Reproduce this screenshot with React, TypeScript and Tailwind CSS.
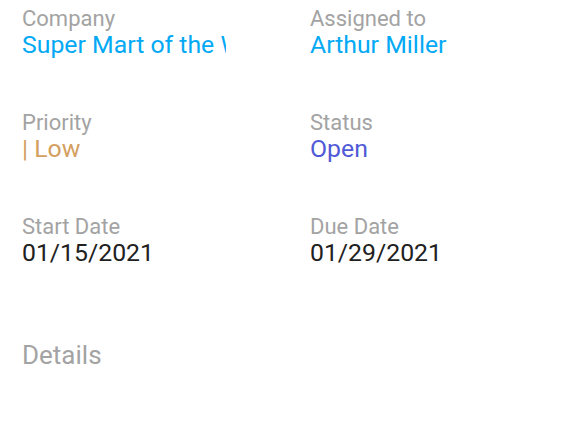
function Field({ label, value, valueClass }: { label: string; value: string; valueClass: string }) {
    return (
        <div className="flex flex-col">
            <span className="text-[22px] leading-[24px] text-[#a3a3a3]">{label}</span>
            <span className={"text-[24.8px] leading-[28px] whitespace-nowrap overflow-hidden " + valueClass}>{value}</span>
        </div>
    );
}

export default function App() {
    return (
        <div className="w-[576px] h-[434px] bg-white font-['Roboto',sans-serif] pl-[22px] pt-[7px]">
            <div className="grid grid-cols-[288px_1fr] gap-y-[52px]">
                <div className="w-[204px]">
                    <Field label="Company" value="Super Mart of the West" valueClass="text-[#03a9f4]" />
                </div>
                <Field label="Assigned to" value="Arthur Miller" valueClass="text-[#03a9f4]" />
                <Field label="Priority" value="| Low" valueClass="text-[#d4a060]" />
                <Field label="Status" value="Open" valueClass="text-[#5059d6]" />
                <Field label="Start Date" value="01/15/2021" valueClass="text-[#212121]" />
                <Field label="Due Date" value="01/29/2021" valueClass="text-[#212121]" />
            </div>
            <div className="mt-[73px] text-[26px] leading-[30px] text-[#a3a3a3]">Details</div>
        </div>
    );
}
